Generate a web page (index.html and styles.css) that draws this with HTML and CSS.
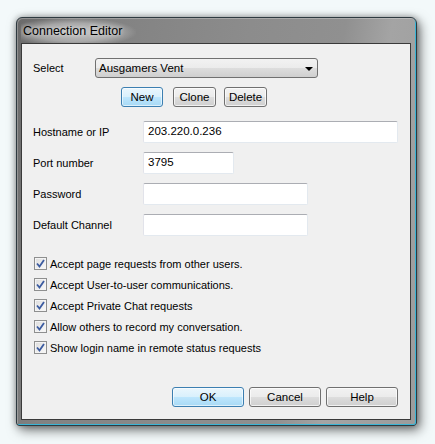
FILE: index.html
```html
<!DOCTYPE html>
<html>
<head>
<meta charset="utf-8">
<link rel="stylesheet" href="styles.css">
</head>
<body>
<div class="window">
  <div class="titlebar"><span class="title">Connection Editor</span></div>
  <div class="client">
    <div class="row select-row">
      <span class="label sel-label">Select</span>
      <div class="combo"><span>Ausgamers Vent</span><span class="arrow"></span></div>
    </div>
    <div class="row btn-row">
      <button class="btn blue w-new">New</button>
      <button class="btn w-clone">Clone</button>
      <button class="btn w-del">Delete</button>
    </div>
    <div class="fields">
      <div class="field"><span class="label flabel">Hostname or IP</span><div class="input w-host">203.220.0.236</div></div>
      <div class="field"><span class="label flabel">Port number</span><div class="input w-port">3795</div></div>
      <div class="field"><span class="label flabel">Password</span><div class="input w-mid"></div></div>
      <div class="field"><span class="label flabel">Default Channel</span><div class="input w-mid"></div></div>
    </div>
    <div class="checks">
      <div class="check"><span class="box"><svg width="9" height="9" viewBox="0 0 9 9"><path d="M1 4.5 L3.5 7.5 L8 1" fill="none" stroke="#3b5ba0" stroke-width="1.8"/></svg></span><span class="label">Accept page requests from other users.</span></div>
      <div class="check"><span class="box"><svg width="9" height="9" viewBox="0 0 9 9"><path d="M1 4.5 L3.5 7.5 L8 1" fill="none" stroke="#3b5ba0" stroke-width="1.8"/></svg></span><span class="label">Accept User-to-user communications.</span></div>
      <div class="check"><span class="box"><svg width="9" height="9" viewBox="0 0 9 9"><path d="M1 4.5 L3.5 7.5 L8 1" fill="none" stroke="#3b5ba0" stroke-width="1.8"/></svg></span><span class="label">Accept Private Chat requests</span></div>
      <div class="check"><span class="box"><svg width="9" height="9" viewBox="0 0 9 9"><path d="M1 4.5 L3.5 7.5 L8 1" fill="none" stroke="#3b5ba0" stroke-width="1.8"/></svg></span><span class="label">Allow others to record my conversation.</span></div>
      <div class="check"><span class="box"><svg width="9" height="9" viewBox="0 0 9 9"><path d="M1 4.5 L3.5 7.5 L8 1" fill="none" stroke="#3b5ba0" stroke-width="1.8"/></svg></span><span class="label">Show login name in remote status requests</span></div>
    </div>
    <div class="footer">
      <button class="btn blue w-foot">OK</button>
      <button class="btn w-foot">Cancel</button>
      <button class="btn w-foot">Help</button>
    </div>
  </div>
</div>
</body>
</html>
```
FILE: styles.css
```css
html, body {
  margin: 0;
  padding: 0;
}
body {
  background: #f3f9fa;
  width: 435px;
  height: 444px;
  padding: 17px 0 0 16px;
  box-sizing: border-box;
  font-family: "Liberation Sans", Arial, sans-serif;
  font-size: 11px;
  color: #000;
}
.window {
  width: 401px;
  height: 409px;
  box-sizing: border-box;
  border: 1px solid #2e3a40;
  border-radius: 6px 6px 3px 3px;
  background: linear-gradient(100deg, #6a6a6a 0%, #828282 20%, #8c8c8c 50%, #909090 70%, #a4a4a4 80%, #9c9c9c 100%);
  box-shadow: inset -1px -1px 0 #39b5d6, inset 1px 1px 0 rgba(255,255,255,0.25), 3px 4px 12px rgba(0,0,0,0.55), 0 0 6px rgba(0,0,0,0.3);
  padding: 0 5px 5px 4px;
  display: flex;
  flex-direction: column;
}
.titlebar {
  height: 25px;
  line-height: 26px;
  padding-left: 0;
  flex: none;
}
.title {
  display: inline-block;
  font-size: 12.5px;
  color: #000;
  padding: 0 14px 0 2px;
  background: radial-gradient(ellipse at 45% 55%, rgba(255,255,255,0.55) 0%, rgba(255,255,255,0.35) 45%, rgba(255,255,255,0) 72%);
  text-shadow: 0 0 4px rgba(255,255,255,0.8);
}
.client {
  flex: 1;
  background: #f0f0f0;
  border: 1px solid #3a3a3a;
  display: flex;
  flex-direction: column;
  padding: 0 12px 12px 11px;
}
.row {
  display: flex;
  align-items: center;
}
.select-row {
  margin-top: 14px;
  height: 20px;
}
.sel-label {
  width: 62px;
  flex: none;
}
.combo {
  width: 223px;
  height: 20px;
  box-sizing: border-box;
  border: 1px solid #707070;
  border-radius: 3px;
  background: linear-gradient(#f2f2f2 0%, #ebebeb 50%, #dddddd 51%, #cfcfcf 100%);
  display: flex;
  align-items: center;
  justify-content: space-between;
  padding: 0 4px 0 3px;
  font-size: 11.5px;
}
.arrow {
  width: 0;
  height: 0;
  border-left: 4px solid transparent;
  border-right: 4px solid transparent;
  border-top: 4px solid #000;
  margin-top: 1px;
}
.btn-row {
  margin-top: 9px;
  padding-left: 88px;
  height: 20px;
}
.btn {
  height: 20px;
  box-sizing: border-box;
  border: 1px solid #707070;
  border-radius: 3px;
  background: linear-gradient(#f2f2f2 0%, #ebebeb 50%, #dddddd 51%, #cfcfcf 100%);
  box-shadow: inset 0 0 0 1px rgba(255,255,255,0.7);
  font-family: "Liberation Sans", Arial, sans-serif;
  font-size: 11.5px;
  color: #000;
  padding: 0;
  margin: 0;
}
.btn.blue {
  border-color: #3c7fb1;
  background: linear-gradient(#eaf6fd 0%, #d9f0fc 50%, #bee6fd 51%, #a7d9f5 100%);
  box-shadow: inset 0 0 0 1px rgba(255,255,255,0.6);
}
.w-new { width: 42px; }
.w-clone { width: 43px; margin-left: 10px; }
.w-del { width: 43px; margin-left: 8px; }
.fields {
  margin-top: 14px;
  display: flex;
  flex-direction: column;
  gap: 9px;
}
.field {
  display: flex;
  align-items: center;
  height: 22px;
}
.flabel {
  width: 110px;
  flex: none;
}
.input {
  height: 22px;
  box-sizing: border-box;
  background: #fff;
  border: 1px solid #dbdfe6;
  border-top-color: #abadb3;
  border-left-color: #e2e3ea;
  border-right-color: #e3e9ef;
  border-bottom-color: #e3e9ef;
  border-radius: 2px;
  padding: 0 4px;
  font-size: 11.5px;
  line-height: 18px;
}
.w-host { width: 256px; }
.w-port { width: 91px; }
.w-mid { width: 165px; }
.checks {
  margin-top: 17px;
  display: flex;
  flex-direction: column;
  padding-left: 1px;
}
.check {
  height: 21px;
  display: flex;
  align-items: center;
}
.box {
  width: 13px;
  height: 13px;
  box-sizing: border-box;
  border: 1px solid #8e8f8f;
  background: linear-gradient(135deg, #dcdcdc, #fafafa);
  box-shadow: inset 0 0 0 1px #f4f4f4;
  display: flex;
  align-items: center;
  justify-content: center;
  margin-right: 3px;
  flex: none;
}
.box svg { display: block; }
.check .label { font-size: 11px; }
.footer {
  margin-top: auto;
  display: flex;
  justify-content: flex-end;
  gap: 5px;
}
.w-foot { width: 72px; }
```
